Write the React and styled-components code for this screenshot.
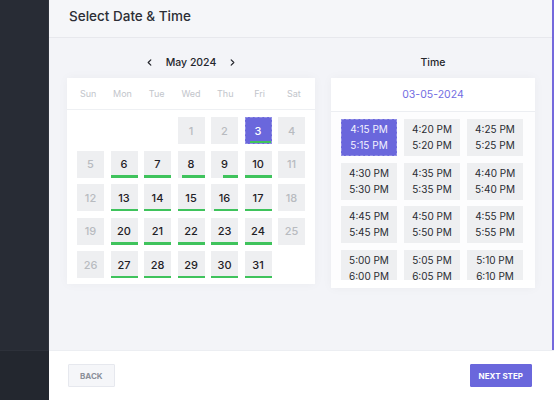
import React from "react";
import styled, { createGlobalStyle } from "styled-components";

const Global = createGlobalStyle`
  html, body { margin: 0; padding: 0; }
  body { font-family: Inter, "Noto Sans", sans-serif; background: #f3f4f8; }
  * { box-sizing: border-box; }
`;

const Layout = styled.div`
  display: flex;
  width: 554px;
  height: 400px;
  overflow: hidden;
`;

const Sidebar = styled.div`
  width: 49px;
  flex: none;
  display: flex;
  flex-direction: column;
  background: #282c35;
`;
const SidebarTop = styled.div`
  flex: 1;
  border-right: 1px solid #30343d;
`;
const SidebarBottom = styled.div`
  height: 50px;
  background: #23272f;
  border-top: 1px solid #2d313a;
`;

const Main = styled.div`
  flex: 1;
  display: flex;
  flex-direction: column;
  min-width: 0;
`;

const Content = styled.div`
  flex: 1;
  display: flex;
  flex-direction: column;
  background: #f3f4f8;
  border-right: 2px solid #7468dc;
`;

const Header = styled.div`
  height: 38px;
  padding: 8px 20px 0;
  font-size: 13.5px;
  font-weight: 500;
  color: #2c2e35;
  border-bottom: 1px solid #e7e8ed;
  background: #f5f6f9;
`;

const Body = styled.div`
  flex: 1;
  display: flex;
  gap: 16px;
  padding: 12px 15px 0 18px;
`;

const Column = styled.div`
  display: flex;
  flex-direction: column;
  width: ${(p) => p.$w}px;
`;

const TitleRow = styled.div`
  height: 24px;
  margin-bottom: 4px;
  display: flex;
  align-items: center;
  justify-content: center;
  gap: 13px;
  font-size: 10.5px;
  font-weight: 500;
  color: #24262c;
`;

const Arrow = styled.svg`
  width: 7px;
  height: 7px;
`;

const Card = styled.div`
  background: #ffffff;
  box-shadow: 0 0 10px rgba(30, 35, 60, 0.04);
  display: flex;
  flex-direction: column;
`;

const WeekRow = styled.div`
  display: grid;
  grid-template-columns: repeat(7, 1fr);
  height: 32px;
  align-items: center;
  border-bottom: 1px solid #eef0f3;
  padding: 0 4px;
  font-size: 9px;
  color: #c2c5cb;
  text-align: center;
`;

const DayGrid = styled.div`
  display: grid;
  grid-template-columns: repeat(7, 27px);
  grid-auto-rows: 27px;
  column-gap: 6.5px;
  row-gap: 6.5px;
  padding: 7px 10px 6px;
`;

const Day = styled.div`
  position: relative;
  display: flex;
  align-items: center;
  justify-content: center;
  font-size: 11px;
  font-weight: 500;
  background: ${(p) => (p.$selected ? "#6a67dc" : "#eeeff1")};
  color: ${(p) => (p.$selected ? "#ffffff" : p.$available ? "#1f2126" : "#b8bbc0")};
  border: ${(p) => (p.$selected ? "1px dashed rgba(255,255,255,0.28)" : "none")};
  grid-column: ${(p) => p.$col || "auto"};
`;

const Bar = styled.span`
  position: absolute;
  right: 0;
  bottom: 0;
  height: 2.5px;
  background: #3fc35c;
`;

const DateHeader = styled.div`
  height: 34px;
  display: flex;
  align-items: center;
  justify-content: center;
  font-size: 10.5px;
  color: #726ce2;
  border-bottom: 1px solid #eceef2;
`;

const SlotList = styled.div`
  height: 168px;
  overflow: hidden;
  padding: 7px 12px 0 10px;
  display: grid;
  grid-template-columns: repeat(3, 56px);
  grid-auto-rows: 37px;
  column-gap: 7px;
  row-gap: 6.5px;
  background: #fdfdfe;
`;

const CardFoot = styled.div`
  height: 8px;
`;

const Slot = styled.div`
  display: flex;
  flex-direction: column;
  align-items: center;
  justify-content: center;
  gap: 3px;
  font-size: 10px;
  line-height: 13px;
  background: ${(p) => (p.$selected ? "#6a67dc" : "#eeeff1")};
  color: ${(p) => (p.$selected ? "#f4f3ff" : "#2a2c31")};
  border: ${(p) => (p.$selected ? "1px dashed rgba(255,255,255,0.28)" : "none")};
`;

const Footer = styled.div`
  height: 50px;
  background: #ffffff;
  display: flex;
  align-items: center;
  justify-content: space-between;
  padding: 0 22px 0 19px;
  border-top: 1px solid #eceef2;
`;

const Button = styled.button`
  height: 23px;
  padding: 0 ${(p) => (p.$primary ? "8px" : "11px")};
  font-family: inherit;
  font-size: 8px;
  font-weight: 700;
  letter-spacing: 0;
  text-transform: uppercase;
  border: 1px solid ${(p) => (p.$primary ? "#6a67dc" : "#e6e8ee")};
  background: ${(p) => (p.$primary ? "#6a67dc" : "#f5f6f9")};
  color: ${(p) => (p.$primary ? "#ffffff" : "#8b909a")};
  border-radius: 1px;
`;

const weekdays = ["Sun", "Mon", "Tue", "Wed", "Thu", "Fri", "Sat"];
const partial = { 3: 0.81, 8: 0.85, 9: 0.55, 16: 0.88 };

const days = Array.from({ length: 31 }, (_, i) => {
  const d = i + 1;
  const dow = (d + 2) % 7; // May 1 2024 = Wed (3)
  const weekend = dow === 0 || dow === 6;
  const available = !weekend && d >= 3;
  return { d, dow, available, selected: d === 3, fill: available ? partial[d] || 1 : 0 };
});

function fmt(mins) {
  const h = Math.floor(mins / 60);
  const m = mins % 60;
  return `${h > 12 ? h - 12 : h}:${String(m).padStart(2, "0")} PM`;
}
const slots = Array.from({ length: 12 }, (_, i) => {
  const start = 16 * 60 + 15 + i * 5;
  return { from: fmt(start), to: fmt(start + 60) };
});

const Chevron = ({ dir }) => (
  <Arrow viewBox="0 0 8 8">
    <path
      d={dir === "left" ? "M5.5 1 L2.5 4 L5.5 7" : "M2.5 1 L5.5 4 L2.5 7"}
      fill="none"
      stroke="#24262c"
      strokeWidth="1.4"
      strokeLinecap="round"
      strokeLinejoin="round"
    />
  </Arrow>
);

export default function App() {
  return (
    <>
      <Global />
      <Layout>
        <Sidebar>
          <SidebarTop />
          <SidebarBottom />
        </Sidebar>
        <Main>
          <Content>
            <Header>Select Date &amp; Time</Header>
            <Body>
              <Column $w={248}>
                <TitleRow>
                  <Chevron dir="left" />
                  <span>May 2024</span>
                  <Chevron dir="right" />
                </TitleRow>
                <Card>
                  <WeekRow>
                    {weekdays.map((w) => (
                      <span key={w}>{w}</span>
                    ))}
                  </WeekRow>
                  <DayGrid>
                    {days.map((day) => (
                      <Day
                        key={day.d}
                        $col={day.d === 1 ? day.dow + 1 : undefined}
                        $available={day.available}
                        $selected={day.selected}
                      >
                        {day.d}
                        {day.fill > 0 && <Bar style={{ width: `${day.fill * 100}%` }} />}
                      </Day>
                    ))}
                  </DayGrid>
                </Card>
              </Column>
              <Column $w={204}>
                <TitleRow>Time</TitleRow>
                <Card>
                  <DateHeader>03-05-2024</DateHeader>
                  <SlotList>
                    {slots.map((s, i) => (
                      <Slot key={s.from} $selected={i === 0}>
                        <span>{s.from}</span>
                        <span>{s.to}</span>
                      </Slot>
                    ))}
                  </SlotList>
                  <CardFoot />
                </Card>
              </Column>
            </Body>
          </Content>
          <Footer>
            <Button>Back</Button>
            <Button $primary>Next Step</Button>
          </Footer>
        </Main>
      </Layout>
    </>
  );
}
